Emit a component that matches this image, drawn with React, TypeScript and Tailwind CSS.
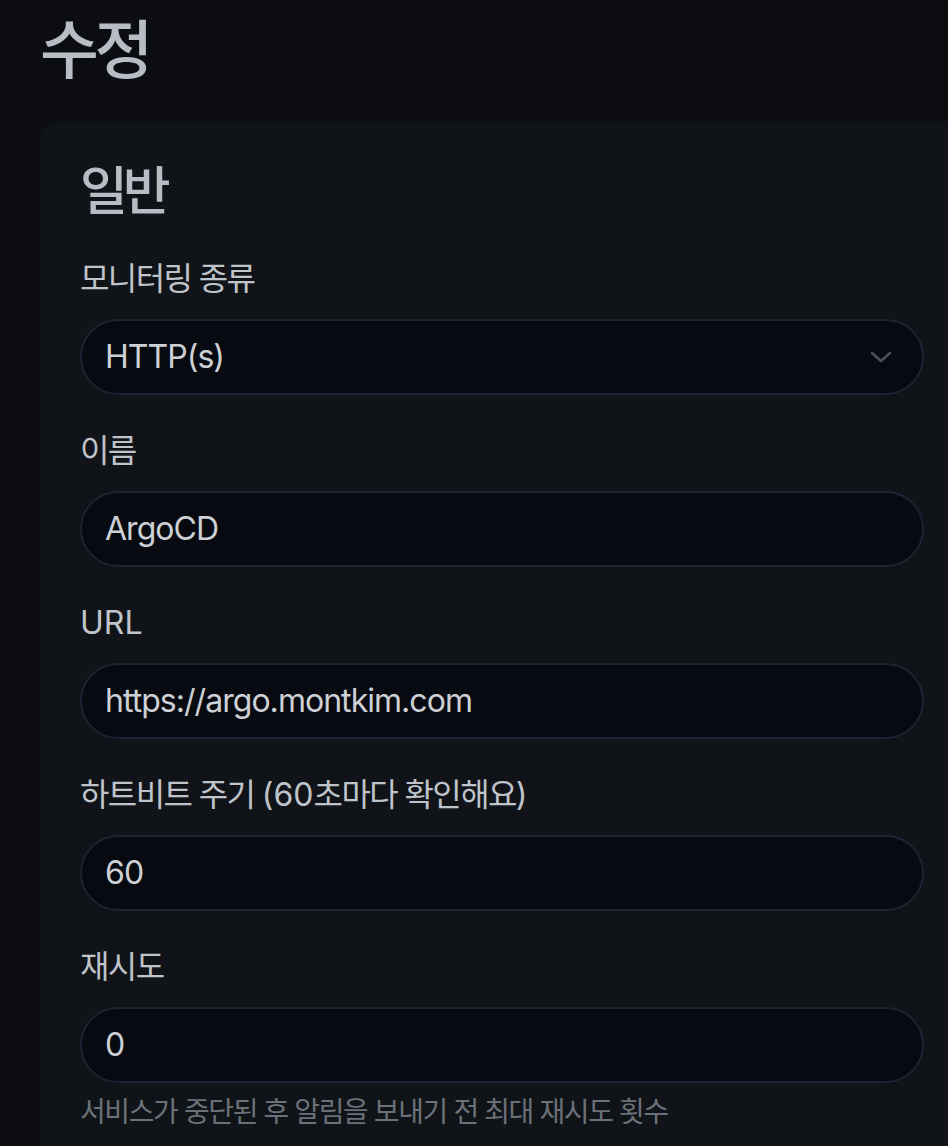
import type { ReactNode } from "react";

const font = {
  fontFamily: 'Inter, "Noto Sans CJK KR", "Noto Sans", sans-serif',
};

// Korean glyphs in Noto are wider than the reference, so tighten them only
function K({ children }: { children: ReactNode }) {
  return <span className="tracking-[-0.05em]">{children}</span>;
}

type Field = {
  label: ReactNode;
  value: string;
  select?: boolean;
  help?: string;
};

const fields: Field[] = [
  { label: <K>모니터링 종류</K>, value: "HTTP(s)", select: true },
  { label: <K>이름</K>, value: "ArgoCD" },
  { label: "URL", value: "https://argo.montkim.com" },
  {
    label: (
      <>
        <K>하트비트 주기 </K>(60<K>초마다 확인해요</K>)
      </>
    ),
    value: "60",
  },
  {
    label: <K>재시도</K>,
    value: "0",
    help: "서비스가 중단된 후 알림을 보내기 전 최대 재시도 횟수",
  },
];

function Chevron() {
  return (
    <svg width="22" height="14" viewBox="0 0 22 14" fill="none">
      <path
        d="M2 3l9 8 9-8"
        stroke="#4b5058"
        strokeWidth="2.6"
        strokeLinecap="round"
        strokeLinejoin="round"
      />
    </svg>
  );
}

export default function App() {
  return (
    <div
      className="min-h-screen overflow-hidden bg-[#0b0d11] pl-[40px] pt-[12px]"
      style={font}
    >
      <h1 className="mb-[32px] text-[64px] font-medium leading-[1.2] tracking-[-0.07em] text-[#b8bcc4]">
        수정
      </h1>
      <div className="w-[924px] rounded-[20px] bg-[#101317] px-[40px] pt-[40px] pb-[60px]">
        <h2 className="mb-[32px] text-[52px] font-medium leading-[1.2] tracking-[-0.1em] text-[#b8bcc4]">
          일반
        </h2>
        {fields.map((f, i) => (
          <div key={i} className={i > 0 ? "mt-[32px]" : ""}>
            <label className="mb-[16px] block text-[32px] leading-[1.5] text-[#bfc3ca]">
              {f.label}
            </label>
            <div className="flex h-[76px] items-center justify-between rounded-full border-2 border-[#1c2433] bg-[#070a10] pl-[23px] pr-[30px]">
              <span className="text-[32px] tracking-[-0.03em] text-[#cdd0d5]">
                {f.value}
              </span>
              {f.select && <Chevron />}
            </div>
            {f.help && (
              <p className="mt-[8px] text-[28px] leading-[1.5] tracking-[-0.05em] text-[#6b7179]">
                {f.help}
              </p>
            )}
          </div>
        ))}
      </div>
    </div>
  );
}
